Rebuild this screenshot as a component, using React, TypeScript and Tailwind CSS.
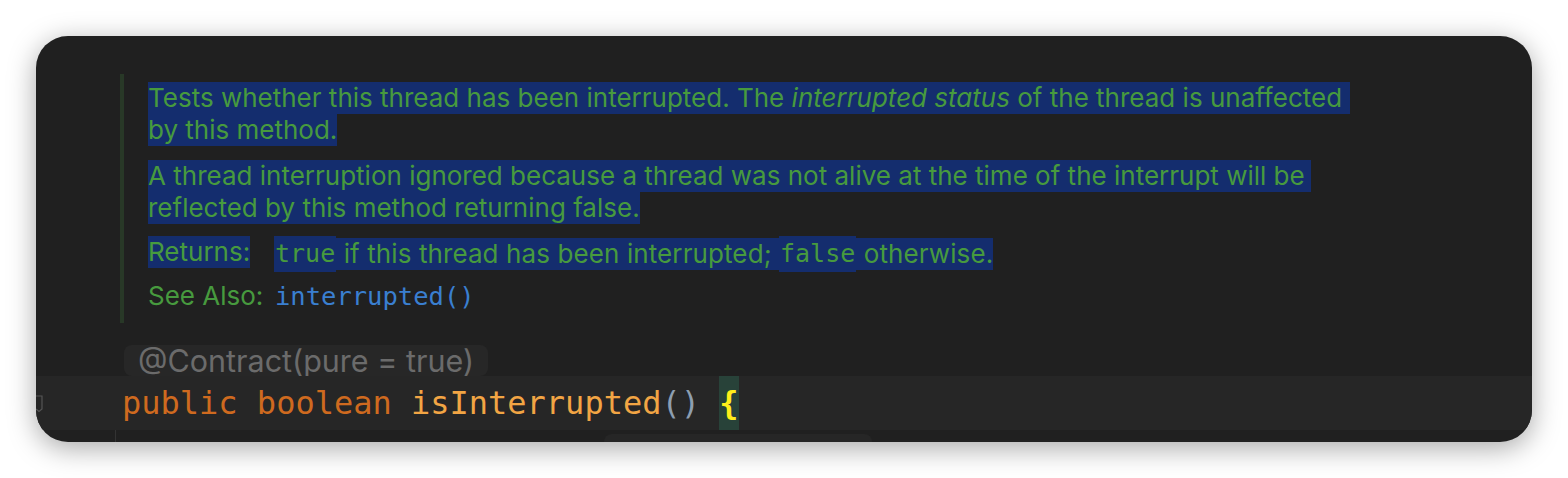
import React from "react";

const prose = { fontFamily: "Inter, 'Noto Sans', sans-serif" };
const mono = { fontFamily: "'DejaVu Sans Mono', 'Liberation Mono', monospace" };

function Hl({ children, className = "" }: { children: React.ReactNode; className?: string }) {
  return <div className={`w-fit h-8 leading-8 bg-[#142d6e] ${className}`}>{children}</div>;
}

function DocBlock() {
  return (
    <div
      className="ml-[84px] mt-[38px] border-l-4 border-[#283827] pl-6 pt-2 pb-[11px] text-[26px] text-[#479a3e]"
      style={prose}
    >
      <div>
        <Hl className="pr-[8px]">
          Tests whether this thread has been interrupted. The <i>interrupted status</i> of the thread is unaffected
        </Hl>
        <Hl>by this method.</Hl>
      </div>
      <div className="mt-[14px]">
        <Hl className="pr-[6px]">
          A thread interruption ignored because a thread was not alive at the time of the interrupt will be
        </Hl>
        <Hl>reflected by this method returning false.</Hl>
      </div>
      <div className="mt-3 flex items-center h-9">
        <div className="w-[126px] flex self-start">
          <span className="h-8 leading-8 bg-[#142d6e]">Returns:</span>
        </div>
        <div className="flex items-center whitespace-pre">
          <span className="h-9 leading-9 bg-[#142d6e] text-[25px] px-[1px]" style={mono}>true</span>
          <span className="h-8 leading-8 bg-[#142d6e] tracking-[0.1px]"> if this thread has been interrupted; </span>
          <span className="h-9 leading-9 bg-[#142d6e] text-[25px] px-[1px]" style={mono}>false</span>
          <span className="h-8 leading-8 bg-[#142d6e] tracking-[0.1px]"> otherwise.</span>
        </div>
      </div>
      <div className="mt-2 flex items-center h-8">
        <div className="w-[127px] leading-8">See Also:</div>
        <div className="text-[25.5px] leading-8 text-[#3a7fd0]" style={mono}>interrupted()</div>
      </div>
    </div>
  );
}

function CodeArea() {
  return (
    <div>
      <div className="ml-[88px] mt-[21px] w-fit h-[31px] rounded-lg bg-[#272727] px-[14px] text-[30.5px] leading-[31px] text-[#6b6b6b]" style={prose}>
        @Contract(pure = true)
      </div>
      <div className="relative h-[54px] bg-[#262626] flex items-center pl-[86px] text-[32px] whitespace-pre" style={mono}>
        <svg className="absolute left-0 top-[19px]" width="8" height="18" viewBox="0 0 8 18">
          <path d="M0 1 H6 V14 L3 16.5 L0 14" fill="none" stroke="#555" strokeWidth="1.2" />
        </svg>
        <span className="text-[#cf6a1f]">public boolean </span>
        <span className="text-[#f2a544]">isInterrupted</span>
        <span className="text-[#8d9eb0]">() </span>
        <span className="h-[54px] leading-[54px] bg-[#284239] text-[#ffee1a] font-bold">{"{"}</span>
      </div>
      <div className="relative h-3">
        <div className="absolute left-[79px] top-0 h-3 w-px bg-[#333]" />
        <div className="absolute left-[568px] top-1 h-4 w-[268px] rounded-t-lg bg-[#262626]" />
      </div>
    </div>
  );
}

export default function App() {
  return (
    <div className="w-[1568px] h-[478px] bg-white p-9">
      <div className="w-[1496px] h-[406px] rounded-[32px] overflow-hidden bg-[#202020] shadow-[0_6px_28px_rgba(0,0,0,0.35)] flex flex-col">
        <DocBlock />
        <div className="flex-1" />
        <CodeArea />
      </div>
    </div>
  );
}
